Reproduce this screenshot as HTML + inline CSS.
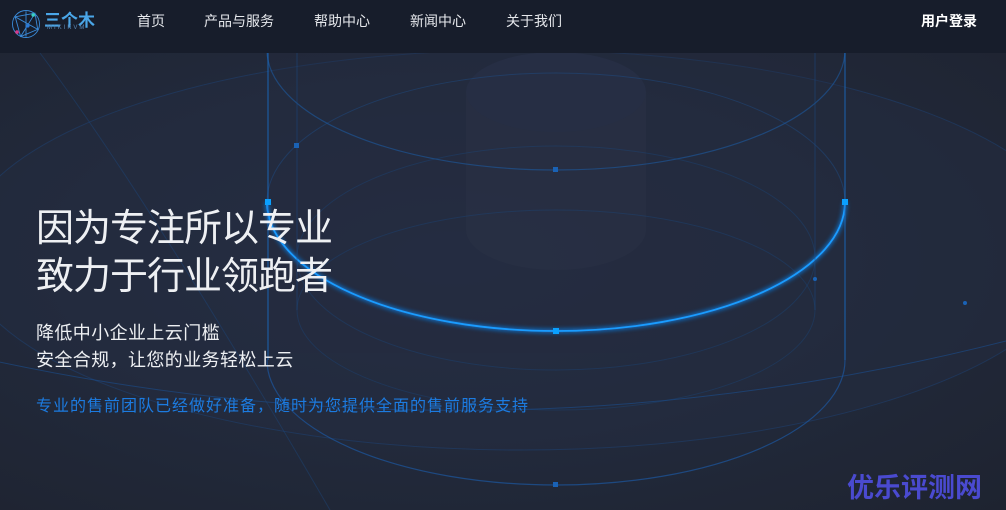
<!DOCTYPE html>
<html><head><meta charset="utf-8"><style>
*{margin:0;padding:0;box-sizing:border-box}
body{width:1006px;height:510px;overflow:hidden;background:#1f2533;font-family:"Liberation Sans","Noto Sans CJK SC",sans-serif;position:relative}
.hdr{position:absolute;left:0;top:0;width:1006px;height:53px;background:#171d2b;z-index:3}
.nav a{position:absolute;top:11px;color:#e6e8ec;font-size:14px;text-decoration:none}
.hero{position:absolute;left:0;top:53px;width:1006px;height:457px;background:radial-gradient(ellipse at 45% 45%,#262f45 0%,#222a3c 50%,#1e2330 100%)}
svg{position:absolute;left:0;top:0}
.t{position:absolute;color:#eef0f3;z-index:2}
</style></head><body>
<div class="hero"></div>
<svg width="1006" height="510" viewBox="0 0 1006 510">
<defs><filter id="g"><feGaussianBlur stdDeviation="2"/></filter></defs>
<ellipse cx="520" cy="250" rx="560" ry="200" fill="#242c3f" opacity=".5"/>
<ellipse cx="520" cy="250" rx="560" ry="200" fill="none" stroke="#1d4a86" stroke-width="1" opacity=".4"/>
<path d="M-10 360 Q500 470 1010 340" fill="none" stroke="#1b4f8f" stroke-width="1" opacity=".6"/>
<rect x="268" y="53" width="577" height="300" fill="#232b40" opacity=".3"/>
<path d="M466 92 L466 230 A90 40 0 0 0 646 230 L646 92" fill="#2a3145" opacity=".7"/>
<ellipse cx="556" cy="92" rx="90" ry="40" fill="#262e44"/>
<ellipse cx="556" cy="50" rx="289" ry="120" fill="none" stroke="#1c5aa0" stroke-width="1.2" opacity=".6"/>
<ellipse cx="556" cy="258" rx="259" ry="112" fill="none" stroke="#1b4a85" stroke-width="1" opacity=".35"/>
<ellipse cx="556" cy="310" rx="259" ry="100" fill="none" stroke="#1b4a85" stroke-width="1" opacity=".35"/>
<path d="M267 360 A289 125 0 0 0 845 360" fill="none" stroke="#1c57a0" stroke-width="1.2" opacity=".7"/>
<ellipse cx="556" cy="202" rx="289" ry="129" fill="none" stroke="#1c5aa0" stroke-width="1" opacity=".35"/>
<path d="M267 202 A289 129 0 0 0 845 202" fill="none" stroke="#0a8cff" stroke-width="4" filter="url(#g)" opacity=".7"/>
<path d="M267 202 A289 129 0 0 0 845 202" fill="none" stroke="#1a9cff" stroke-width="1.8"/>
<line x1="268" y1="53" x2="268" y2="360" stroke="#1a6fc8" stroke-width="1.2" opacity=".7"/>
<line x1="845" y1="53" x2="845" y2="360" stroke="#1a6fc8" stroke-width="1.2" opacity=".7"/>
<line x1="297" y1="53" x2="297" y2="310" stroke="#1b4a85" opacity=".5"/>
<line x1="815" y1="53" x2="815" y2="310" stroke="#1b4a85" opacity=".5"/>
<path d="M40 53 Q150 200 330 510" fill="none" stroke="#1b4a85" opacity=".4"/>
<g fill="#0aa0ff"><rect x="265" y="199" width="6" height="6"/><rect x="842" y="199" width="6" height="6"/><rect x="553" y="328" width="6" height="6"/></g>
<g fill="#1a62b5"><rect x="553" y="167" width="5" height="5"/><rect x="553" y="482" width="5" height="5"/><rect x="294" y="143" width="5" height="5"/><circle cx="815" cy="279" r="2"/><circle cx="965" cy="303" r="2"/></g>
</svg>
<div class="hdr">
<svg width="36" height="36" viewBox="0 0 40 40" style="left:8px;top:6px"><g fill="none" stroke="#3a8ad8" stroke-width="1"><circle cx="20" cy="20" r="15"/><path d="M8 12 L30 8 L33 26 L14 34 Z M8 12 L33 26 M30 8 L14 34 M20 6 L20 34"/></g><circle cx="10" cy="29" r="2" fill="#d43a8a"/><circle cx="28" cy="10" r="2" fill="#3ad0c0"/><circle cx="22" cy="22" r="2" fill="#2a7ad8"/></svg>
<div style="position:absolute;left:44px;top:6px;color:#4aa6e8;font-size:17px;font-weight:bold;letter-spacing:0">三个木</div>
<div style="position:absolute;left:47px;top:25px;color:#5a8ab8;font-size:6px;letter-spacing:2px">MIKIKVM</div>
<div class="nav"><a style="left:137px">首页</a><a style="left:204px">产品与服务</a><a style="left:314px">帮助中心</a><a style="left:410px">新闻中心</a><a style="left:506px">关于我们</a><a style="left:921px;color:#fff;font-weight:bold">用户登录</a></div>
</div>
<div class="t" style="left:36px;top:205px;font-size:38px;line-height:48px;letter-spacing:-1px">因为专注所以专业<br>致力于行业领跑者</div>
<div class="t" style="left:36px;top:320px;font-size:18px;line-height:27px;letter-spacing:.4px">降低中小企业上云门槛<br>安全合规，让您的业务轻松上云</div>
<div class="t" style="left:36px;top:392px;font-size:16px;color:#1c7be0;letter-spacing:1px">专业的售前团队已经做好准备，随时为您提供全面的售前服务支持</div>
<div class="t" style="left:847px;top:466px;font-size:27px;font-weight:bold;color:#4a4ad0">优乐评测网</div>
</body></html>
